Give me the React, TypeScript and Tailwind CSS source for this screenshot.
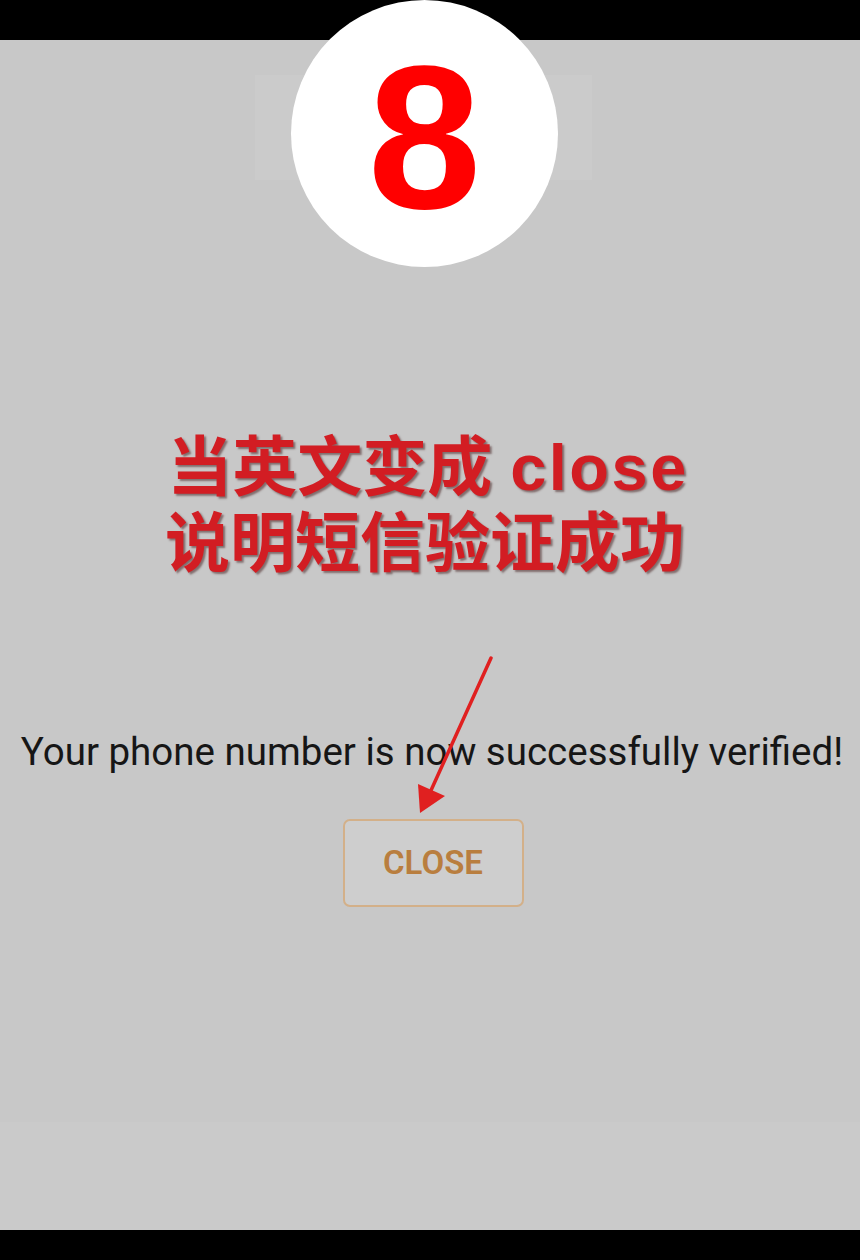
import React from "react";

export default function App() {
  return (
    <div className="w-[860px] h-[1260px] flex flex-col bg-black relative overflow-hidden">
      <div className="h-[40px] bg-black shrink-0" />
      <div className="flex-1 bg-[#c8c8c8] flex flex-col items-center relative">
        <div className="absolute left-[255px] top-[35px] w-[337px] h-[105px] bg-[#cbcbcb]" />
        <div className="absolute left-0 right-0 bottom-0 h-[108px] bg-[#cacaca]" />
        <div
          className="relative pt-[384px] text-center text-[#d21d23] font-bold text-[65px] leading-[76px] [text-shadow:2px_2px_2px_rgba(60,20,20,0.5)]"
          style={{ fontFamily: '"Noto Sans CJK SC", sans-serif' }}
        >
          <div className="whitespace-nowrap pr-[4px]">
            <span>当英文变成</span>
            <span
              className="ml-[18px] tracking-[2.5px] leading-[60px]"
              style={{ fontFamily: '"Liberation Sans", Arial, sans-serif' }}
            >
              close
            </span>
          </div>
          <div className="whitespace-nowrap pr-[10px]">说明短信验证成功</div>
        </div>
        <div
          className="relative mt-[153px] text-[38.5px] leading-[46px] text-[#161616] whitespace-nowrap pl-[4px]"
          style={{ fontFamily: "Roboto, sans-serif" }}
        >
          Your phone number is now successfully verified!
        </div>
        <div
          className="relative mt-[44px] ml-[6px] w-[181px] h-[88px] rounded-[7px] border-2 border-[#d3b089] bg-[#cecece] flex items-center justify-center text-[#b97e3f] text-[33px] font-semibold"
          style={{ fontFamily: "Roboto, sans-serif" }}
        >
          CLOSE
        </div>
      </div>
      <div className="h-[30px] bg-black shrink-0" />

      {/* number badge */}
      <div className="absolute left-[291px] top-0 w-[267px] h-[267px] rounded-full bg-white flex items-center justify-center">
        <span
          className="text-[#ff0000] font-bold text-[204px] leading-none mt-[6px]"
          style={{ fontFamily: '"Liberation Sans", Arial, sans-serif' }}
        >
          8
        </span>
      </div>

      {/* red arrow */}
      <svg className="absolute left-0 top-0" width="860" height="1260" viewBox="0 0 860 1260">
        <line x1="491" y1="658" x2="428" y2="797" stroke="#e02020" strokeWidth="3.5" strokeLinecap="round" />
        <polygon points="420,813 418,784 445,796" fill="#e02020" />
      </svg>
    </div>
  );
}
